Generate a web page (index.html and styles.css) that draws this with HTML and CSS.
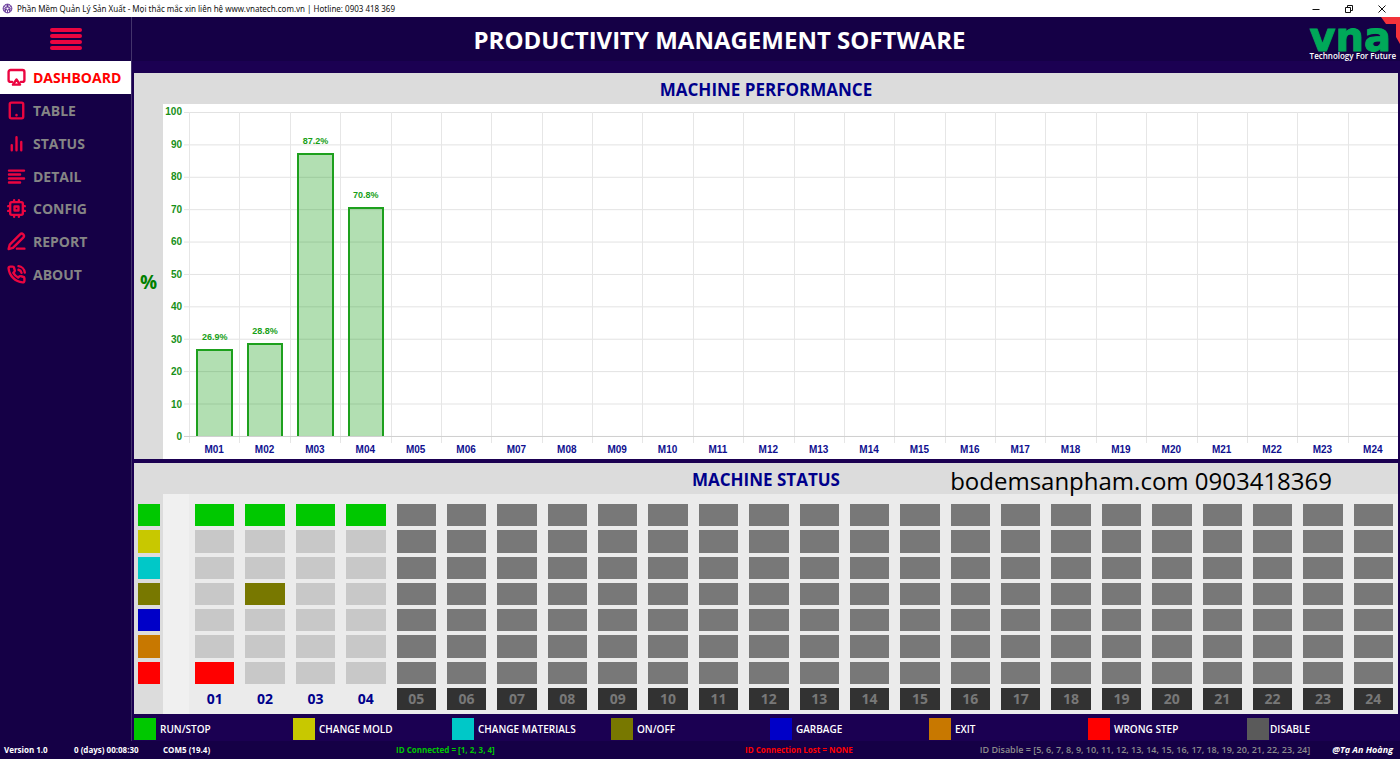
FILE: index.html
```html
<!DOCTYPE html>
<html lang="vi">
<head>
<meta charset="utf-8">
<title>Phần Mềm Quản Lý Sản Xuất</title>
<link rel="stylesheet" href="styles.css">
</head>
<body>
<div class="window">
  <header class="titlebar">
    <svg class="app-icon" viewBox="0 0 24 24"><circle cx="12" cy="12" r="9.5"/><circle cx="12" cy="12" r="3.5"/><path d="M12 2.500v6M20.500 7l-5.500 3.200M20.500 17l-5.500-3.200M12 21.500v-6M3.500 17l5.500-3.200M3.500 7l5.500 3.200M7 4l5 4.500L17 4M21 12l-5.500 1.500L17 20M7 20l1.500-6.500L3 12"/></svg>
    <span class="window-title">Phần Mềm Quản Lý Sản Xuất - Mọi thắc mắc xin liên hệ www.vnatech.com.vn | Hotline: 0903 418 369</span>
    <div class="controls">
      <button aria-label="Minimize"><svg viewBox="0 0 10 10"><path d="M1.500 5.500h7"/></svg></button>
      <button aria-label="Restore"><svg viewBox="0 0 10 10"><path d="M1.500 3.500h5v5h-5zM3.500 3.500v-2h5v5h-2"/></svg></button>
      <button aria-label="Close"><svg viewBox="0 0 10 10"><path d="M1.500 1.500l7 7M8.500 1.500l-7 7"/></svg></button>
    </div>
  </header>

  <div class="body">
    <aside class="sidebar">
      <button class="menu" aria-label="Menu"><span></span><span></span><span></span><span></span></button>
      <nav>
        <a class="item active" href="#"><svg viewBox="0 0 24 24"><path d="M6.500 17.500H4.500a2.500 2.500 0 0 1-2.500-2.500V5a2.500 2.500 0 0 1 2.500-2.500h15A2.500 2.500 0 0 1 22 5v10a2.500 2.500 0 0 1-2.500 2.500h-2"/><path d="M12 14.500l4.500 6.500h-9z"/></svg>DASHBOARD</a>
        <a class="item" href="#"><svg viewBox="0 0 24 24"><rect x="3.500" y="2" width="17" height="20" rx="2"/><path d="M12 17.500v.5"/></svg>TABLE</a>
        <a class="item" href="#"><svg viewBox="0 0 24 24"><path d="M6 14v6.500M12 4v16.500M18 10v10.500"/></svg>STATUS</a>
        <a class="item" href="#"><svg viewBox="0 0 24 24"><path d="M2.500 4.500h19M2.500 9.500h14M2.500 14.500h19M2.500 19.500h14"/></svg>DETAIL</a>
        <a class="item" href="#"><svg viewBox="0 0 24 24"><rect x="4" y="4" width="16" height="16" rx="2"/><rect x="9.500" y="9.500" width="5" height="5"/><path d="M9 1.500v2M15 1.500v2M9 20.500v2M15 20.500v2M1.500 9h2M1.500 15h2M20.500 9h2M20.500 15h2"/></svg>CONFIG</a>
        <a class="item" href="#"><svg viewBox="0 0 24 24"><path d="M12.500 21H22M16.500 3a2.800 2.800 0 0 1 4 4L7.500 20l-5.500 1.500L3.500 16z"/></svg>REPORT</a>
        <a class="item" href="#"><svg viewBox="0 0 24 24"><path d="M14.500 6a5 5 0 0 1 3.800 3.800M14.500 1.500a9 9 0 0 1 8 8M22 17v3a2 2 0 0 1-2.200 2A19.800 19.800 0 0 1 2 4.200 2 2 0 0 1 4 2h3a2 2 0 0 1 2 1.700c.1 1 .4 1.900.7 2.800a2 2 0 0 1-.5 2.100L8 9.900a16 16 0 0 0 6 6l1.300-1.300a2 2 0 0 1 2.100-.4c.9.300 1.800.6 2.800.7A2 2 0 0 1 22 17z"/></svg>ABOUT</a>
      </nav>
    </aside>

    <main class="content">
      <div class="banner">
        <h1>PRODUCTIVITY MANAGEMENT SOFTWARE</h1>
        <div class="logo"><span class="logo-name">vna</span><span class="logo-tag">Technology For Future</span></div>
        <svg class="corner" viewBox="0 0 19 27"><path d="M0 0h19v27l-4-7V7H5z"/></svg>
      </div>

      <section class="panel performance">
        <h2>MACHINE PERFORMANCE</h2>
        <div class="panel-row">
          <div class="unit">%</div>
          <div class="chart">
            <div class="y-axis"><span>100</span><span>90</span><span>80</span><span>70</span><span>60</span><span>50</span><span>40</span><span>30</span><span>20</span><span>10</span><span>0</span></div>
            <div class="plot" id="plot"></div>
            <div class="x-axis" id="x-axis"></div>
          </div>
        </div>
      </section>

      <section class="panel status">
        <h2>MACHINE STATUS</h2>
        <div class="contact">bodemsanpham.com 0903418369</div>
        <div class="panel-row">
          <div class="keys"><i class="run"></i><i class="mold"></i><i class="materials"></i><i class="onoff"></i><i class="garbage"></i><i class="exit"></i><i class="wrong"></i></div>
          <div class="spacer"></div>
          <div class="machines" id="machines"></div>
        </div>
      </section>

      <ul class="legend">
        <li><i class="run"></i>RUN/STOP</li>
        <li><i class="mold"></i>CHANGE MOLD</li>
        <li><i class="materials"></i>CHANGE MATERIALS</li>
        <li><i class="onoff"></i>ON/OFF</li>
        <li><i class="garbage"></i>GARBAGE</li>
        <li><i class="exit"></i>EXIT</li>
        <li><i class="wrong"></i>WRONG STEP</li>
        <li class="tight"><i class="disable"></i>DISABLE</li>
      </ul>
    </main>
  </div>

  <footer class="statusbar">
    <span class="version">Version 1.0</span>
    <span class="uptime">0 (days) 00:08:30</span>
    <span class="port">COM5 (19.4)</span>
    <span class="connected">ID Connected = [1, 2, 3, 4]</span>
    <span class="lost">ID Connection Lost = NONE</span>
    <span class="disabled">ID Disable = [5, 6, 7, 8, 9, 10, 11, 12, 13, 14, 15, 16, 17, 18, 19, 20, 21, 22, 23, 24]</span>
    <span class="author">@Tạ An Hoàng</span>
  </footer>
</div>
<script src="app.js"></script>
</body>
</html>
```
FILE: styles.css
```css
* { box-sizing: border-box; }
body {
  margin: 0;
  font-family: "Open Sans", "Noto Sans", sans-serif;
  font-weight: 700;
  color: #fff;
  background: #150046;
}
h1, h2, ul { margin: 0; padding: 0; }
button { padding: 0; border: 0; background: none; }
.window { display: flex; flex-direction: column; height: 100vh; }

.titlebar {
  display: flex;
  align-items: center;
  height: 17px;
  padding-left: 2px;
  background: #fff;
  color: #111;
}
.app-icon { width: 11px; height: 11px; margin-right: 4px; fill: none; stroke: #5b2a91; stroke-width: 2; }
.window-title { flex: 1; font: 400 8px/16px "Noto Sans", sans-serif; }
.controls { display: flex; gap: 23px; padding-right: 13px; }
.controls button { display: flex; }
.controls svg { width: 10px; height: 10px; fill: none; stroke: #111; stroke-width: 1; }

.body { display: flex; flex: 1; min-height: 0; }
.sidebar { width: 132px; border-right: 1px solid #43336b; background: #150046; }
.menu {
  display: flex;
  flex-direction: column;
  justify-content: center;
  gap: 2px;
  width: 32px;
  height: 44px;
  margin: 0 auto;
}
.menu span { height: 4px; border-radius: 2px; background: #eb0540; }
nav { display: flex; flex-direction: column; height: 230px; }
.item {
  display: flex;
  flex: 1;
  align-items: center;
  gap: 7px;
  padding-left: 7px;
  color: #858585;
  font-size: 14px;
  text-decoration: none;
}
.item.active { background: #fff; color: #f00; }
.item svg {
  width: 19px;
  height: 19px;
  fill: none;
  stroke: #eb0540;
  stroke-width: 3;
  stroke-linecap: round;
  stroke-linejoin: round;
}

.content { display: flex; flex-direction: column; flex: 1; min-width: 0; padding-left: 2px; background: #1b0052; }
.banner {
  position: relative;
  display: flex;
  height: 56px;
  margin-left: -2px;
  padding-right: 4px;
  background: linear-gradient(#150046 44px, #1b0052 44px);
}
h1 { flex: 1; font-size: 24px; line-height: 46px; text-align: center; }
.logo { position: relative; z-index: 1; display: flex; flex-direction: column; width: 89px; text-align: right; }
.logo-name {
  height: 33px;
  padding-right: 5px;
  color: #00a859;
  font: 700 40px/40px "DejaVu Sans", sans-serif;
  -webkit-text-stroke: 1px #00a859;
}
.logo-tag { font-size: 8px; font-weight: 600; line-height: 12px; white-space: nowrap; }
.corner { position: absolute; top: 0; right: 0; width: 19px; height: 27px; fill: #f2323a; }

.panel { display: flex; flex-direction: column; margin-right: 2px; background: #dcdcdc; }
h2 { padding-top: 3px; color: #00008b; font-size: 17px; line-height: 28px; text-align: center; }
.panel-row { display: flex; flex: 1; min-height: 0; }
.performance { flex: 1; min-height: 0; margin-bottom: 4px; }
.unit { display: flex; align-items: center; justify-content: center; width: 29px; color: #008000; font-size: 19px; }
.chart {
  display: grid;
  grid-template-columns: 26px 1fr;
  grid-template-rows: 1fr 22px;
  flex: 1;
  padding-top: 8px;
  background: #fff;
  font-family: "Liberation Sans", Arial, sans-serif;
  font-size: 10px;
}
.y-axis {
  display: flex;
  flex-direction: column;
  justify-content: space-between;
  margin: -8px 7px -8px 0;
  color: #189018;
  line-height: 16px;
  text-align: right;
}
.plot {
  display: grid;
  grid-template-columns: repeat(24, 1fr);
  margin-left: -5px;
  padding-left: 5px;
  border-bottom: 1px solid #d0d0d0;
  background: linear-gradient(#e2e2e2 1px, transparent 1px) 0 0 / 100% 10%;
}
.slot {
  display: flex;
  flex-direction: column;
  justify-content: flex-end;
  align-items: center;
  border-left: 1px solid #e6e6e6;
}
.slot span { color: #18a018; font-size: 9px; line-height: 12px; margin-bottom: 6px; }
.bar { flex: none; width: 74%; border: 2px solid #1da01d; border-bottom: 0; background: #0096004d; }
.x-axis { display: grid; grid-template-columns: repeat(24, 1fr); grid-column: 2; color: #101090; line-height: 26px; text-align: center; }
.x-axis span { background: linear-gradient(#e6e6e6, #e6e6e6) 0 0 / 1px 6px no-repeat; }

.status { position: relative; }
.contact {
  position: absolute;
  top: 1px;
  right: 66px;
  color: #000;
  font-size: 24px;
  font-weight: 400;
  line-height: 34px;
}
.status .panel-row { flex: none; height: 220px; }
.keys, .machine { display: grid; grid-template-rows: repeat(8, 1fr); row-gap: 4px; }
.keys { width: 29px; padding: 10px 3px 4px 4px; }
.spacer { width: 26px; background: #f0f0f0; }
.machines { display: grid; grid-template-columns: repeat(24, 1fr); flex: 1; padding: 10px 0 4px; background: #ebebeb; }
.machine { padding: 0 5px 0 6px; }
.cell { background: #c8c8c8; }
.off .cell { background: #787878; }
.name { color: #00008b; font-size: 14px; line-height: 22px; text-align: center; }
.off .name { background: #323232; color: #787878; }

.run, .cell.run { background: #00c800; }
.mold { background: #c8c800; }
.materials { background: #00c8c8; }
.onoff, .cell.onoff { background: #787800; }
.garbage { background: #0000c8; }
.exit { background: #c87800; }
.wrong, .cell.wrong { background: #f00; }
.disable { background: #5a5a5a; }

.legend { display: grid; grid-template-columns: repeat(8, 1fr); gap: 6px; padding: 4px 0 1px; list-style: none; }
.legend li { display: flex; align-items: center; gap: 4px; font-size: 10px; font-weight: 600; line-height: 22px; white-space: nowrap; }
.legend .tight { gap: 1px; }
.legend i { width: 22px; height: 22px; }

.statusbar { display: flex; padding: 0 7px 0 4px; font-size: 8px; line-height: 18px; white-space: nowrap; }
.version { width: 70px; }
.uptime { width: 89px; }
.port { width: 233px; }
.connected { width: 349px; color: #00c800; }
.lost { color: #f00; }
.disabled { margin-left: auto; color: #8c8c8c; font-size: 9px; font-weight: 600; }
.author { margin-left: 22px; font-size: 9px; font-style: italic; }
```
FILE: app.js
```js
const values = [26.9, 28.8, 87.2, 70.8];
const active = { 1: { 0: 'run', 6: 'wrong' }, 2: { 0: 'run', 3: 'onoff' }, 3: { 0: 'run' }, 4: { 0: 'run' } };
const plot = document.getElementById('plot');
const axis = document.getElementById('x-axis');
const machines = document.getElementById('machines');

for (let n = 1; n <= 24; n++) {
  const id = String(n).padStart(2, '0');
  const value = values[n - 1];
  const bar = value ? `<span>${value}%</span><div class="bar" style="height:${value}%"></div>` : '';
  plot.insertAdjacentHTML('beforeend', `<div class="slot">${bar}</div>`);
  axis.insertAdjacentHTML('beforeend', `<span>M${id}</span>`);

  let cells = '';
  for (let row = 0; row < 7; row++) {
    cells += `<div class="cell ${(active[n] || {})[row] || ''}"></div>`;
  }
  machines.insertAdjacentHTML('beforeend',
    `<div class="machine ${active[n] ? '' : 'off'}">${cells}<div class="name">${id}</div></div>`);
}
```
